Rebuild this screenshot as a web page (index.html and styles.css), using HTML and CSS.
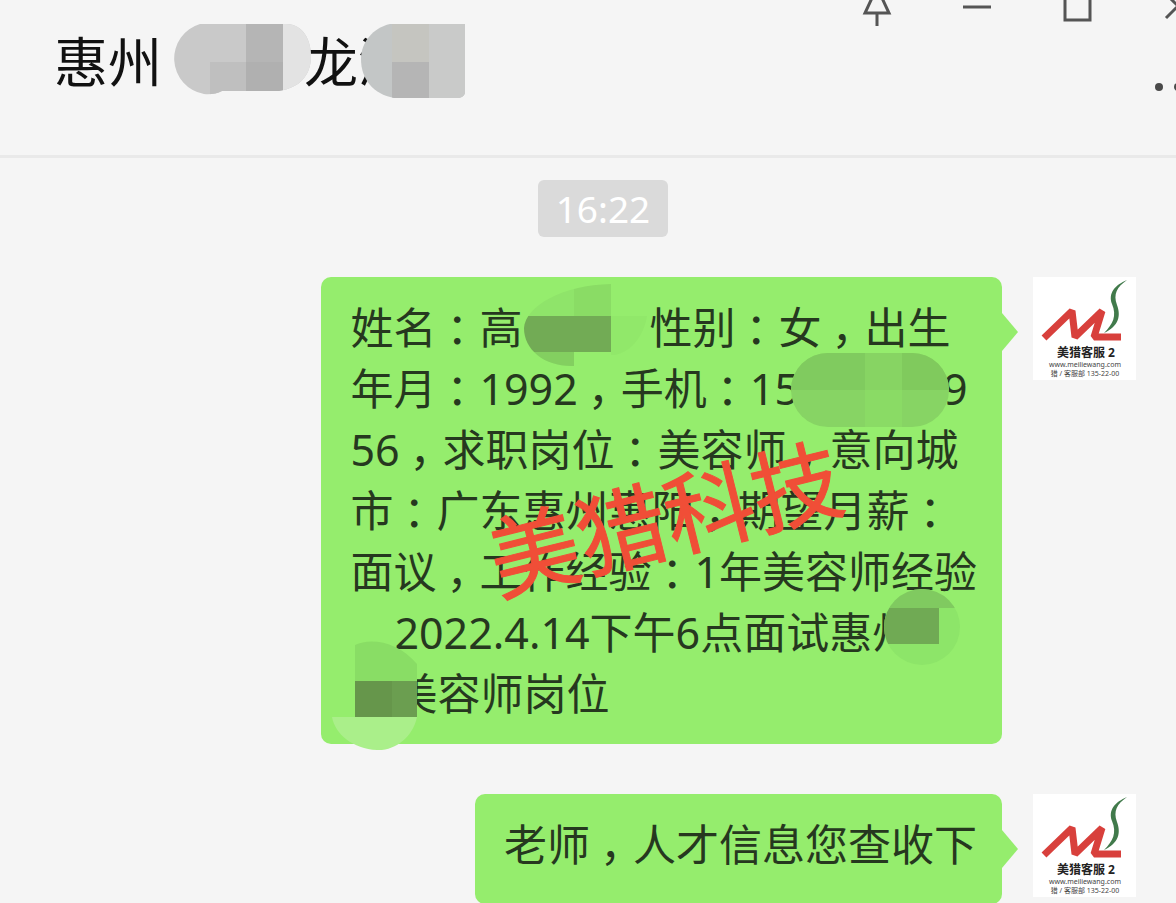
FILE: index.html
```html
<!DOCTYPE html>
<html lang="zh-CN">
<head>
    <meta charset="UTF-8">
    <meta name="viewport" content="width=device-width, initial-scale=1.0">
    <title>聊天</title>
    <link rel="stylesheet" href="styles.css">
</head>
<body>
    <!-- 头像图形，两条消息共用 -->
    <svg class="defs" aria-hidden="true">
        <symbol id="logo" viewBox="0 0 103 103">
            <path d="M11 61 L39 34 L42 60 L69 34 L61 60 H88" fill="none" stroke="#d8403c" stroke-width="7" stroke-linejoin="bevel"/>
            <path d="M94 3 C82 8 75 16 79 27 C84 39 80 47 71 56 C86 49 88 39 84 28 C80 17 84 10 94 3 Z" fill="#417a4b"/>
            <text class="logo-name" x="53" y="80" text-anchor="middle">美猎客服 2</text>
            <text class="logo-small" x="52" y="90" text-anchor="middle">www.meiliewang.com</text>
            <text class="logo-small" x="52" y="99" text-anchor="middle">猎 / 客服部 135-22-00</text>
        </symbol>
    </svg>

    <header class="header">
        <h1 class="title">惠州<span class="gap gap-title"></span>龙溪
            <svg class="mask mask-title" viewBox="0 0 320 80" aria-hidden="true">
                <clipPath id="c1"><path d="M36 3 H122 C140 3 147 20 147 35 C147 55 135 67 115 70 H58 Q50 74 40 73 A36 36 0 0 1 36 3 Z"/></clipPath>
                <g clip-path="url(#c1)">
                    <rect width="160" height="80" fill="#c9c9c9"/>
                    <rect x="46" y="41" width="37" height="39" fill="#bfbfbf"/>
                    <rect x="82" width="37" height="41" fill="#b5b5b5"/>
                    <rect x="82" y="41" width="37" height="39" fill="#b0b0b0"/>
                    <rect x="119" width="37" height="80" fill="#e3e3e3"/>
                </g>
                <clipPath id="c2"><path d="M226 3 H301 V72 Q300 76 295 77 H230 C209 73 197 58 197 38 C197 21 209 7 226 3 Z"/></clipPath>
                <g clip-path="url(#c2)">
                    <rect x="196" width="110" height="80" fill="#c3c6c6"/>
                    <rect x="228" width="37" height="41" fill="#c5c5c0"/>
                    <rect x="228" y="41" width="37" height="39" fill="#b5b5b5"/>
                    <rect x="265" width="40" height="80" fill="#c9cac9"/>
                </g>
            </svg>
        </h1>
        <div class="controls">
            <div class="window-buttons">
                <button type="button" aria-label="置顶">
                    <svg viewBox="0 0 40 40"><path d="M12 6 H28 M15 6 V12 L8 27 H32 L25 12 V6 M20 27 V41"/></svg>
                </button>
                <button type="button" aria-label="最小化">
                    <svg viewBox="0 0 40 40"><path d="M6 21 H34"/></svg>
                </button>
                <button type="button" aria-label="最大化">
                    <svg viewBox="0 0 40 40"><path d="M8 8 H33 V34 H8 Z"/></svg>
                </button>
                <button type="button" aria-label="关闭">
                    <svg viewBox="0 0 40 40"><path d="M9 8 L33 32 M33 8 L9 32"/></svg>
                </button>
            </div>
            <button class="more" type="button" aria-label="更多">
                <svg viewBox="0 0 60 20"><circle cx="11" cy="10" r="4"/><circle cx="30" cy="10" r="4"/><circle cx="49" cy="10" r="4"/></svg>
            </button>
        </div>
    </header>

    <main class="chat">
        <time class="time">16:22</time>

        <div class="message">
            <div class="bubble">
                <p>姓名<i>：</i>高<span class="gap gap-name"></span>性别<i>：</i>女<i>，</i>出生</p>
                <p>年月<i>：</i>1992<i>，</i>手机<i>：</i>15<span class="gap gap-phone"></span>9</p>
                <p>56<i>，</i>求职岗位<i>：</i>美容师<i>，</i>意向城</p>
                <p>市<i>：</i>广东惠州惠阳<i>，</i>期望月薪<i>：</i></p>
                <p>面议<i>，</i>工作经验<i>：</i>1年美容师经验</p>
                <p><span class="gap gap-indent"></span>2022.4.14下午6点面试惠州</p>
                <p><span class="gap gap-indent"></span>美容师岗位</p>

                <svg class="mask mask-message" viewBox="0 0 680 480" aria-hidden="true">
                    <!-- 姓名 -->
                    <clipPath id="c3"><path d="M290 7 V39 H326 C321 68 301 79 290 78 V75 H253 V89 C224 90 203 73 203 51 C205 29 241 8 290 7 Z"/></clipPath>
                    <g clip-path="url(#c3)">
                        <rect x="200" width="53" height="95" fill="#8fe46a"/>
                        <rect x="253" width="37" height="40" fill="#8adc65"/>
                        <rect x="200" y="75" width="53" height="20" fill="#83cf60"/>
                        <rect x="200" y="39" width="90" height="36" fill="#72ab55"/>
                        <rect x="290" y="39" width="40" height="40" fill="#91e86a"/>
                    </g>
                    <!-- 手机 -->
                    <clipPath id="c4"><rect x="470" y="76" width="158" height="74" rx="37"/></clipPath>
                    <g clip-path="url(#c4)">
                        <rect x="468" y="75" width="161" height="76" fill="#87d464"/>
                        <rect x="468" y="75" width="76" height="38" fill="#80cb5f"/>
                        <rect x="544" y="75" width="37" height="38" fill="#87d463"/>
                        <rect x="581" y="75" width="48" height="38" fill="#80ca5d"/>
                        <rect x="544" y="113" width="37" height="38" fill="#8adb65"/>
                    </g>
                    <!-- 面试地点 -->
                    <clipPath id="c5"><circle cx="601" cy="350" r="38"/></clipPath>
                    <g clip-path="url(#c5)">
                        <rect x="560" y="310" width="80" height="80" fill="#8de569"/>
                        <rect x="560" y="310" width="80" height="21" fill="#80ca60"/>
                        <rect x="560" y="331" width="58" height="36" fill="#70aa54"/>
                    </g>
                    <clipPath id="c6"><path d="M34 368 C50 360 78 365 96 387 V440 C92 460 74 474 56 473 C32 472 14 457 11 440 H34 Z"/></clipPath>
                    <g clip-path="url(#c6)">
                        <rect x="34" y="360" width="65" height="44" fill="#89dd65"/>
                        <rect x="34" y="404" width="37" height="36" fill="#66964b"/>
                        <rect x="71" y="404" width="28" height="36" fill="#6b9e50"/>
                        <rect x="10" y="440" width="88" height="36" fill="#aaef8a"/>
                    </g>
                </svg>
                <span class="watermark">美猎科技</span>
            </div>
            <svg class="avatar" role="img" aria-label="美猎客服2"><use href="#logo"/></svg>
        </div>

        <div class="message">
            <div class="bubble">
                <p>老师<i>，</i>人才信息您查收下</p>
            </div>
            <svg class="avatar" role="img" aria-label="美猎客服2"><use href="#logo"/></svg>
        </div>
    </main>
</body>
</html>
```

FILE: styles.css
```css
* {
    box-sizing: border-box;
}
body {
    margin: 0;
    height: 100vh;
    overflow: hidden;
    background-color: #f5f5f5;
    font-family: 'Noto Sans', 'Noto Sans CJK SC', sans-serif;
}
.defs {
    position: absolute;
    width: 0;
    height: 0;
}
.header {
    display: flex;
    justify-content: space-between;
    height: 158px;
    overflow: hidden;
    border-bottom: 3px solid #e9e9e9;
}
.title {
    position: relative;
    margin: 0;
    padding: 22px 0 0 54px;
    color: #111111;
    font-size: 54px;
    font-weight: normal;
    line-height: 80px;
    white-space: nowrap;
}
.gap {
    display: inline-block;
}
.gap-title {
    width: 142px;
}
.gap-name {
    width: 127px;
}
.gap-phone {
    width: 144px;
}
.gap-indent {
    width: 44px;
}
.mask {
    position: absolute;
}
.mask-title {
    left: 164px;
    top: 21px;
    width: 320px;
    height: 80px;
}
.mask-message {
    left: 0;
    top: 0;
    width: 680px;
    height: 480px;
}
.controls {
    display: flex;
    flex-direction: column;
    align-items: flex-end;
    margin-top: -14px;
    margin-right: -51px;
}
.window-buttons {
    display: flex;
}
button {
    padding: 0;
    border: none;
    background: none;
    cursor: pointer;
}
.window-buttons button {
    width: 100px;
    height: 40px;
}
button svg {
    display: block;
    width: 40px;
    height: 40px;
    margin: 0 auto;
    fill: none;
    stroke: #555555;
    stroke-width: 3;
}
.more {
    margin-top: 51px;
    margin-right: -8px;
}
.more svg {
    width: 60px;
    height: 20px;
    margin-right: 27px;
    fill: #4a4a4a;
    stroke: none;
}
.chat {
    display: flex;
    flex-direction: column;
    padding: 22px 40px 0;
}
.time {
    align-self: center;
    margin-left: 30px;
    padding: 0 18px;
    border-radius: 6px;
    background-color: #dadada;
    color: #ffffff;
    font-size: 37px;
    line-height: 57px;
}
.message {
    display: flex;
    justify-content: flex-end;
    align-items: flex-start;
    gap: 31px;
    margin-top: 40px;
}
.message + .message {
    margin-top: 50px;
}
.bubble {
    position: relative;
    min-height: 110px;
    padding: 20px 25px 20px 29px;
    border-radius: 10px;
    background-color: #95ed6d;
    color: #26381f;
    font-size: 43px;
    line-height: 61px;
    white-space: nowrap;
}
.bubble::after {
    content: '';
    position: absolute;
    left: 100%;
    top: 36px;
    width: 16px;
    height: 38px;
    background-color: #95ed6d;
    clip-path: polygon(0 0, 100% 50%, 0 100%);
}
.bubble p {
    height: 61px;
    margin: 0;
}
/* 标点在字格中居中 */
.bubble i {
    display: inline-block;
    width: 43px;
    padding-left: 10px;
    font-style: normal;
    line-height: 1;
}
.watermark {
    position: absolute;
    left: 164px;
    top: 191px;
    color: #f04e37;
    font-size: 90px;
    line-height: 100px;
    -webkit-text-stroke: 1px #f04e37;
    transform: rotate(-14deg);
}
.avatar {
    flex: none;
    width: 103px;
    height: 103px;
    background-color: #ffffff;
}
.logo-name {
    fill: #222222;
    font-size: 12px;
    font-weight: bold;
}
.logo-small {
    fill: #444444;
    font-size: 7px;
}
```
